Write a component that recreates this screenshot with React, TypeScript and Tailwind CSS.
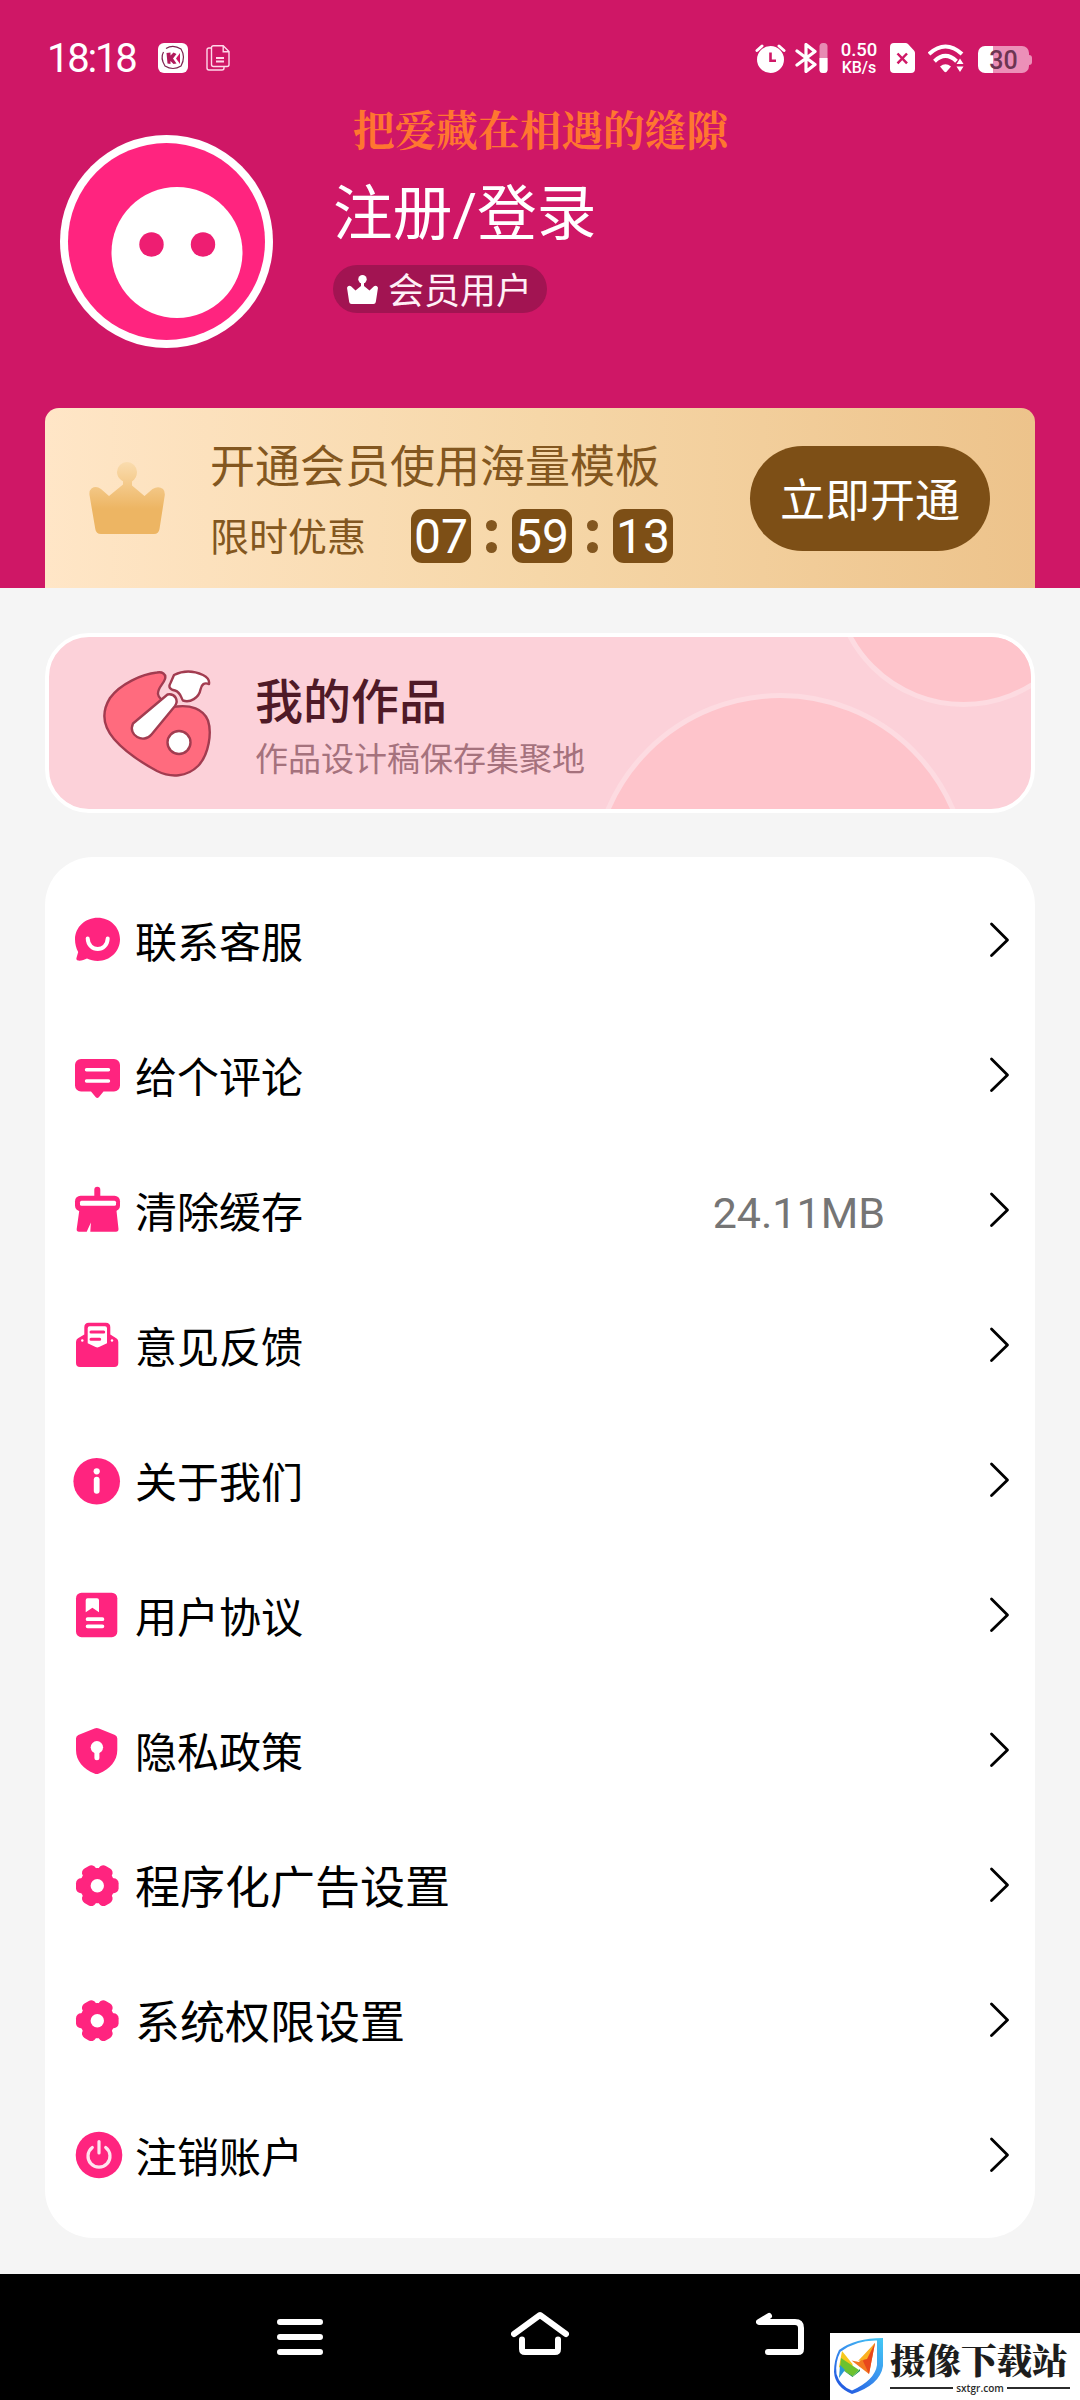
import type { ReactNode } from "react";
import clsx from "clsx";

type MenuItem = {
  label: string;
  icon: ReactNode;
  value?: string;
  large?: boolean;
};

const gear = (
  <>
    <circle cx="24.3" cy="25.7" r="17.6" />
    <rect x="3" y="18.2" width="42.6" height="15" rx="5" />
    <rect x="3" y="18.2" width="42.6" height="15" rx="5" transform="rotate(60 24.3 25.7)" />
    <rect x="3" y="18.2" width="42.6" height="15" rx="5" transform="rotate(120 24.3 25.7)" />
    <circle cx="24.3" cy="25.7" r="6.7" fill="#fff" />
  </>
);

const menu: MenuItem[] = [
  {
    label: "联系客服",
    icon: (
      <>
        <path d="M24.7 2.7C37 2.7 47 12 47 24.3S37 46 24.7 46c-4 0-7.500-.8-10.700-2.400-2.600 1.400-5.600 2.200-8.800 2-1.700-.2-2.200-1.600-1.600-3l1.600-5.600C3.200 33.400 2 29.200 2 24.300 2 12 12.400 2.700 24.700 2.700Z" />
        <path d="M14.700 23.500c.5 14 19.500 14 20 0" fill="none" stroke="#fff" strokeWidth="4" strokeLinecap="round" />
      </>
    ),
  },
  {
    label: "给个评论",
    icon: (
      <>
        <path d="M8 9h33a6 6 0 0 1 6 6v20.500a6 6 0 0 1-6 6H30.500l-4.700 5.700q-1.500 1.500-3 0L18 41.500H8a6 6 0 0 1-6-6V15a6 6 0 0 1 6-6Z" />
        <path d="M13.500 19.700h22M13.500 31h22" stroke="#fff" strokeWidth="3.400" strokeLinecap="round" />
      </>
    ),
  },
  {
    label: "清除缓存",
    value: "24.11MB",
    icon: (
      <>
        <rect x="21.300" y="1.700" width="6" height="14" rx="3" />
        <rect x="2" y="10.700" width="45" height="15.500" rx="5.500" />
        <path d="M6.500 24h36.800l2.200 20q0 2.700-2.500 2.700H17.300l.6-9.200-4.200 9.200H6q-2.600 0-2.300-2.700Z" />
        <rect x="7" y="15.700" width="36" height="5" rx="1.500" fill="#fff" />
      </>
    ),
  },
  {
    label: "意见反馈",
    icon: (
      <>
        <path d="M3 22q0-2.500 2-3.800l6.300-3.700V7.200q0-4.500 4.500-4.500h17q4.500 0 4.500 4.500v7.300l6 3.700q2 1.300 2 3.800v21q0 4-4 4H7q-4 0-4-4Z" />
        <path d="M14.700 8.300q0-2 2-2H32q2 0 2 2v15l-8 3.700q-1.700.8-3.400 0l-7.900-3.700Z" fill="#fff" />
        <path d="M18 12h12.700M18 19.300h8.700" stroke="#ff247f" strokeWidth="3" strokeLinecap="round" />
        <circle cx="9.300" cy="20.500" r="1.200" fill="#fff" />
        <circle cx="39" cy="20.500" r="1.200" fill="#fff" />
      </>
    ),
  },
  {
    label: "关于我们",
    icon: (
      <>
        <circle cx="23.700" cy="26.300" r="23.300" />
        <circle cx="23.700" cy="16.300" r="3.100" fill="#fff" />
        <rect x="20.800" y="21.700" width="5.800" height="17" rx="2.900" fill="#fff" />
      </>
    ),
  },
  {
    label: "用户协议",
    icon: (
      <>
        <rect x="3" y="2.700" width="41.300" height="44.500" rx="5.500" />
        <path d="M14.500 8.300H24q2 0 2 2v12l-6.600-4.600-6.700 4.600v-12q0-2 1.800-2Z" fill="#fff" />
        <path d="M14.600 29.200h14.800M14.600 36.300h14.800" stroke="#fff" strokeWidth="3.800" strokeLinecap="round" />
      </>
    ),
  },
  {
    label: "隐私政策",
    icon: (
      <>
        <path d="M21.500 3.500q2.200-1.200 4.400 0L42 10q2.300 1 2.300 3.500v11.500c0 11-7.500 19-18.300 23.500q-2.300 1-4.600 0C10.500 44 3 36 3 25V13.500Q3 11 5.300 10Z" />
        <circle cx="23.900" cy="22.300" r="6.200" fill="#fff" />
        <path d="M23.900 24v8.800" stroke="#fff" strokeWidth="5" strokeLinecap="round" />
      </>
    ),
  },
  { label: "程序化广告设置", icon: gear, large: true },
  { label: "系统权限设置", icon: gear, large: true },
  {
    label: "注销账户",
    icon: (
      <>
        <circle cx="26" cy="25" r="23.300" />
        <path d="M19.300 17.500a11 11 0 1 0 13.400 0M26 11.500v11.500" fill="none" stroke="#ffe3ef" strokeWidth="3.200" strokeLinecap="round" />
      </>
    ),
  },
];

function StatusBar() {
  return (
    <div className="flex h-[100px] shrink-0 items-start pt-[43px] pl-[47px] text-white">
      <span className="mr-px w-[110px] pt-px text-[40px] leading-[30px] font-normal tracking-[-2.200px]">18:18</span>
      <svg className="size-[30px]" viewBox="0 0 30 30">
        <rect width="30" height="30" rx="6" fill="#fff" />
        <path d="M8 5.500Q15 1 23 6q5 8 0 17-8 5-16 0-5-8-1.500-14" fill="none" stroke="#7c2350" strokeWidth="1.200" />
        <path d="M6 3.500l3 3M5 6.500l3.500 2.500M8.500 10l4-.5v3l3-3 3 1.500-3.500 4.500 3.500 5-3 .5-3-3v3l-3-.5Z" fill="#b01b5c" />
        <path d="M22 10v11l-4-5.500Z" fill="#cf1766" />
      </svg>
      <svg className="mt-0.5 ml-[18px] h-[26px] w-6" viewBox="0 0 24 26" fill="none" stroke="#ffd9ea" strokeWidth="1.400">
        <path d="M5.500 3H3Q1 3 1 5v18q0 2 2 2h13q2 0 2-2v-1.500" />
        <path d="M7.500.8h9.700L23 6.500v13q0 2-2 2H7.500q-2 0-2-2V2.800q0-2 2-2ZM17.200 1v5.700H23" />
        <path d="M10 13h8M10 16.500h8" strokeWidth="1.800" />
      </svg>
      <svg className="ml-[525px] h-[30px] w-[31px]" viewBox="0 0 31 30">
        <circle cx="15.500" cy="16.500" r="13.500" fill="#fff" />
        <path d="M2 7.500 7 3M29 7.500 24 3" stroke="#fff" strokeWidth="3" strokeLinecap="round" />
        <path d="M15.500 9.500v8.300H21" fill="none" stroke="#cf1766" strokeWidth="2.600" />
      </svg>
      <svg className="ml-[9px] h-[30px] w-[33px]" viewBox="0 0 33 30" fill="none">
        <path d="m2 8 18 13.500-9 7V1.500l9 7L2 22" stroke="#fff" strokeWidth="3.200" strokeLinejoin="round" strokeLinecap="round" />
        <rect x="24.500" width="8" height="30" rx="3.500" fill="#fff" opacity=".5" />
        <path d="M24.500 15h8v11.500a3.500 3.500 0 0 1-3.500 3.500h-1a3.500 3.500 0 0 1-3.500-3.500Z" fill="#fff" />
      </svg>
      <div className="-mt-0.5 ml-3 flex w-[38px] flex-col items-center text-[18.500px] leading-[18px] font-medium">
        <span>0.50</span>
        <span className="text-[16px]">KB/s</span>
      </div>
      <svg className="ml-3 h-[30px] w-[25px]" viewBox="0 0 25 30">
        <path d="M4 0h11.500q1.500 0 2.500 1l6 6.500q1 1 1 2.500v16q0 4-4 4H4q-4 0-4-4V4q0-4 4-4Z" fill="#fff" />
        <path d="m7.500 10.500 9.500 9.800M17 10.500l-9.500 9.800" stroke="#cf1766" strokeWidth="2.500" />
      </svg>
      <svg className="ml-[13px] h-[30px] w-9" viewBox="0 0 36 30" fill="none" stroke="#fff" strokeWidth="4">
        <path d="M1 11q16.500-15 33 0M6.500 18.200q11-10.500 22 0" />
        <path d="M12 23.500q5.500-4.500 11 0l-4.200 5q-1.300 1.300-2.600 0Z" fill="#fff" stroke="none" />
        <path d="m32 15.500 3.500 5.500h-7ZM32 29l3.500-5.500h-7Z" fill="#fff" stroke="none" />
      </svg>
      <div className="mt-[3px] ml-[14px] flex items-center">
        <div className="flex h-[27px] w-[51px] items-center justify-center rounded-[7px] bg-linear-to-r from-white from-30% to-[#ec90b8] to-30%">
          <span className="pt-0.5 text-[25px] leading-[27px] font-medium text-[#6d3552]">30</span>
        </div>
        <div className="h-2.5 w-[3px] rounded-r-sm bg-[#ec90b8]" />
      </div>
    </div>
  );
}

function Profile() {
  return (
    <div className="flex items-start pl-[60px]">
      <svg className="mt-[35px] size-[213px] shrink-0" viewBox="0 0 213 213">
        <circle cx="106.500" cy="106.500" r="106.500" fill="#fff" />
        <circle cx="106.500" cy="106.500" r="98.500" fill="#ff247f" />
        <circle cx="117" cy="117.500" r="65.500" fill="#fff" />
        <circle cx="91.500" cy="109.500" r="12.200" fill="#ee1e72" />
        <circle cx="143" cy="109.500" r="12.200" fill="#ee1e72" />
      </svg>
      <div className="ml-[60px] flex flex-col items-start">
        <div className="-mt-px pl-5 font-['Noto_Serif_CJK_SC','Noto_Serif_SC','AR_PL_UKai_CN','Noto_Sans_CJK_SC',serif] text-[41.700px] leading-[58px] font-bold text-[#ff7630]">
          把爱藏在相遇的缝隙
        </div>
        <h1 className="mt-4 text-[59.700px] leading-[84px] font-normal text-white">注册/登录</h1>
        <div className="mt-2 flex h-12 w-[214px] items-center rounded-full bg-[#a21452] pl-[14px]">
          <svg className="h-[29px] w-[31px]" viewBox="0 0 31 29" fill="#fff">
            <circle cx="15.500" cy="4.200" r="4.200" />
            <path d="M14 7h3v4l5.500 4.500L27 11.200q3-1.200 4 1.600L28.800 27q-.3 2-2.300 2h-22q-2 0-2.300-2L0 12.800q1-2.800 4-1.600l4.500 4.300L14 11Z" />
          </svg>
          <span className="ml-2.5 pt-1.5 text-[36px] leading-[48px] text-[#fff0f6]">会员用户</span>
        </div>
      </div>
    </div>
  );
}

function Colon() {
  return (
    <div className="mx-[15px] flex flex-col gap-[11px]">
      <div className="size-[11px] rounded-full bg-[#835720]" />
      <div className="size-[11px] rounded-full bg-[#835720]" />
    </div>
  );
}

function TimeBox({ children }: { children: ReactNode }) {
  return (
    <div className="flex h-[54px] w-[60px] items-center justify-center rounded-[11px] bg-[#7d4f16] pt-0.5 text-[48px] leading-[52px] text-white">
      {children}
    </div>
  );
}

function VipBanner() {
  return (
    <div className="mx-[45px] mt-auto flex h-[180px] items-center rounded-t-[14px] bg-linear-to-r from-[#ffe6c7] via-[#f6d7a8] to-[#edc38b] pr-[45px] pl-[44px]">
      <svg className="h-[72px] w-[76px]" viewBox="0 0 76 72">
        <defs>
          <linearGradient id="crown" x1="0" y1="0" x2="0" y2="1">
            <stop offset="0" stopColor="#fadcae" />
            <stop offset=".65" stopColor="#edb563" />
            <stop offset="1" stopColor="#edb563" />
          </linearGradient>
        </defs>
        <path
          d="M38 0a10 10 0 0 1 10 10c0 4-2 7.500-5 9.500v4L55.500 34l8-7q6-3.500 10.500 0 2 2 1.800 6L70.500 67q-.8 5-5.500 5H12q-5 0-5.700-5L.5 33q-.5-4.500 2-6.500 4.500-3 9.500.5l8 7L34 22.500v-3.200c-3.500-2-6-5.300-6-9.300A10 10 0 0 1 38 0Z"
          fill="url(#crown)"
        />
      </svg>
      <div className="ml-[45px] flex flex-col pt-[3px] text-[#835720]">
        <div className="text-[45px] leading-[64px] whitespace-nowrap">开通会员使用海量模板</div>
        <div className="mt-[9px] flex h-[54px] items-center">
          <span className="w-[201px] pt-1 text-[39px] leading-[54px]">限时优惠</span>
          <TimeBox>07</TimeBox>
          <Colon />
          <TimeBox>59</TimeBox>
          <Colon />
          <TimeBox>13</TimeBox>
        </div>
      </div>
      <button className="ml-auto h-[105px] w-[240px] rounded-full bg-[#7d4f16] pt-[6px] text-[45px] leading-[99px] text-white">
        立即开通
      </button>
    </div>
  );
}

function WorksCard() {
  return (
    <div className="relative mx-[45px] mt-[45px] flex h-[180px] shrink-0 items-center overflow-hidden rounded-[44px] border-[4px] border-white bg-[#fcd1d9] pl-[54px]">
      {/* bubbles behind the content */}
      <svg className="absolute inset-0 size-full" viewBox="49 637 982 172" fill="#fec4cb" stroke="#fddbe1" strokeWidth="5">
        <circle cx="780.500" cy="883" r="187.500" />
        <circle cx="963.500" cy="576" r="128.500" />
      </svg>
      <svg className="relative h-[108px] w-[110px]" viewBox="0 0 110 108" stroke="#a23c50" strokeWidth="2.400" strokeLinejoin="round">
        <path
          d="M54 3.500c5-1.200 9.500 1.500 8 6.500-1.500 5-7.500 9-7 15 .3 4 3 5 5 7l-4 6 18-.5c13-1.500 26 2 31 14 4 12 1 34-10 45.500-11 11-27 12-41 5C41 95 24 85 11 70-1 56-1 42 7 29 17 15 39 5 54 3.500Z"
          fill="#ff6b7e"
        />
        <path d="M64.500 25.500q5.500-1 8 3t-.5 8.500L48.500 65.500c-8 9.500-24 1-18.500-11Z" fill="#fff" />
        <path d="M71 6q14-7 29 0 7 3.500 6 9-7-2.500-8.500 5.500C96 29 87 34 80 31.500c-2-2.500-2-8-8-10q-8-1.500-4.500-7.500Z" fill="#fff" />
        <circle cx="76" cy="73.500" r="11.500" fill="#fff" />
      </svg>
      <div className="relative ml-[42px] flex flex-col pt-[10px]">
        <span className="text-[48px] leading-[60px] font-medium text-[#4f1a27]">我的作品</span>
        <span className="mt-[3px] text-[33px] leading-[48px] text-[#a5727d]">作品设计稿保存集聚地</span>
      </div>
    </div>
  );
}

function MenuRow({ item }: { item: MenuItem }) {
  return (
    <li className="flex h-[135px] items-center pr-[25px] pl-7">
      <svg className="size-[49px] shrink-0 overflow-visible" viewBox="0 0 49 49" fill="#ff247f">
        {item.icon}
      </svg>
      <span className={clsx("mt-2 ml-[13px] text-black", item.large ? "text-[45px]" : "text-[42px]")}>
        {item.label}
      </span>
      {item.value && <span className="mt-2 mr-[104px] ml-auto text-[43px] text-[#757575]">{item.value}</span>}
      <svg
        className={clsx("h-[37px] w-[21px]", !item.value && "ml-auto")}
        viewBox="0 0 21 37"
        fill="none"
        stroke="#000"
        strokeWidth="2.800"
        strokeLinecap="round"
        strokeLinejoin="round"
      >
        <path d="m2.500 3 16 16-16 15.500" />
      </svg>
    </li>
  );
}

function NavBar() {
  return (
    <div className="relative mt-auto flex h-[126px] shrink-0 items-start pt-[36px] pl-[277px]">
      <svg className="h-[48px] w-[46px]" viewBox="0 0 46 48" stroke="#fff" strokeWidth="6" strokeLinecap="round">
        <path d="M3 12h40M3 27h40M3 42h40" />
      </svg>
      <svg className="ml-[188px] h-[48px] w-[58px]" viewBox="0 0 58 48" fill="none" stroke="#fff" strokeWidth="6" strokeLinecap="round" strokeLinejoin="round">
        <path d="M3 24 29 5l26 19M11 29.500V39q0 3 3 3h30q3 0 3-3v-9.500" />
      </svg>
      <svg className="ml-[187px] h-[48px] w-[48px]" viewBox="0 0 48 48" fill="none" stroke="#fff" strokeWidth="6" strokeLinecap="round" strokeLinejoin="round">
        <path d="m13 6-10 6h36q6 0 6 6v21q0 3-3 3H12" />
      </svg>

      {/* site badge */}
      <div className="absolute right-0 bottom-0 flex h-[67px] w-[250px] items-start bg-white pt-[5px] pl-1">
        <svg className="h-[57px] w-[49px] shrink-0" viewBox="0 0 49 57">
          <defs>
            <linearGradient id="shield" x1="1" y1="0" x2=".2" y2="1">
              <stop offset="0" stopColor="#43c9f5" />
              <stop offset=".5" stopColor="#3a93ee" />
              <stop offset="1" stopColor="#2157e0" />
            </linearGradient>
          </defs>
          <path
            fillRule="evenodd"
            d="M5 12Q21 0 49 0v28Q46 47 18 56 1 49 0 34 0 22 5 12Zm1.500 1.800Q1 24 2.500 36 6 48 18 52.500 41 42 43 27V2.500Q22 2 6.500 13.800Z"
            fill="url(#shield)"
          />
          <path d="M8 13 18.500 26v12L5 29Z" fill="#f6c81c" />
          <path d="M7 20 25 32 19 38 6 30Z" fill="#6cc22f" />
          <path d="M6 30 19 38l6-6 1-1v2L18.500 39Z" fill="#1f9b4c" />
          <path d="M6 27 11 32 5 40Z" fill="#2898d8" />
          <path d="M41 5 35 36 17.500 22.500 25 24Z" fill="#f37a21" />
          <path d="M41 5 35 36 29 23Z" fill="#e8471c" />
          <path d="M41 5 24 23l9-2Z" fill="#fbb020" />
        </svg>
        <div className="ml-[7px] flex w-[180px] flex-col">
          <span className="font-['Noto_Serif_CJK_SC','Noto_Serif_SC','Noto_Sans_CJK_SC',serif] text-[35.500px] leading-[42px] font-black text-[#1d1d1d]">
            摄像下载站
          </span>
          <div className="flex items-center gap-[3px]">
            <div className="h-0.5 flex-1 bg-[#2b2b2b]" />
            <span className="font-['Open_Sans',sans-serif] text-[10px] leading-4 font-semibold text-[#2b2b2b]">sxtgr.com</span>
            <div className="h-0.5 flex-1 bg-[#2b2b2b]" />
          </div>
        </div>
      </div>
    </div>
  );
}

export default function App() {
  return (
    <div className="flex h-[2400px] w-[1080px] flex-col overflow-hidden bg-black font-[Roboto,'Noto_Sans_CJK_SC',sans-serif]">
      <div className="flex h-[2274px] flex-col bg-[#f5f5f5]">
        <header className="flex h-[588px] shrink-0 flex-col bg-[#cf1766]">
          <StatusBar />
          <Profile />
          <VipBanner />
        </header>
        <WorksCard />
        <ul className="mx-[45px] mt-11 flex h-[1381px] shrink-0 flex-col rounded-[48px] bg-white py-[15px]">
          {menu.map((item) => (
            <MenuRow key={item.label} item={item} />
          ))}
        </ul>
      </div>
      <NavBar />
    </div>
  );
}
